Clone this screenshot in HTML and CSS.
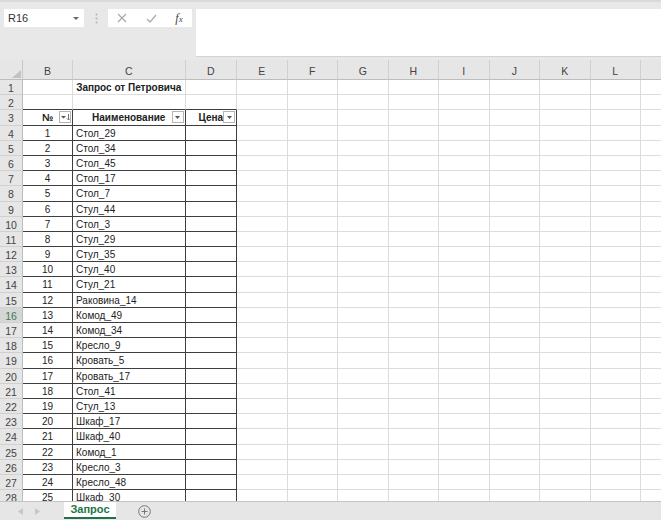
FILE: index.html
```html
<!DOCTYPE html>
<html lang="ru">

<head>
  <meta charset="UTF-8">
  <title>Запрос от Петровича</title>
  <link rel="stylesheet" href="styles.css">
</head>

<body>
  <!-- formula bar -->
  <div class="toolbar">
    <div class="namebox">
      <span>R16</span>
      <svg width="6" height="3" viewBox="0 0 6 3"><path d="M0 0h6L3 3z" fill="#666" /></svg>
    </div>
    <div class="dots">
      <svg width="3" height="11" viewBox="0 0 3 11">
        <circle cx="1.5" cy="1.5" r="1" fill="#b4b4b4" />
        <circle cx="1.5" cy="5.5" r="1" fill="#b4b4b4" />
        <circle cx="1.5" cy="9.5" r="1" fill="#b4b4b4" />
      </svg>
    </div>
    <div class="fxbox">
      <svg width="10" height="10" viewBox="0 0 10 10"><path d="M1 1l8 8M9 1l-8 8" stroke="#a9a9a9" stroke-width="1.2" /></svg>
      <svg width="11" height="9" viewBox="0 0 11 9"><path d="M1 5l3 3 6-7" fill="none" stroke="#a9a9a9" stroke-width="1.2" /></svg>
      <span class="fx">f<small>x</small></span>
    </div>
    <div class="input"></div>
  </div>

  <!-- sheet -->
  <div class="sheet">
    <div class="grid">
      <div class="corner"><svg width="9" height="8" viewBox="0 0 9 8"><path d="M9 0v8H0z" fill="#c2c2c2" /></svg></div>
      <div class="ch">B</div><div class="ch">C</div><div class="ch">D</div><div class="ch">E</div><div class="ch">F</div><div class="ch">G</div><div class="ch">H</div><div class="ch">I</div><div class="ch">J</div><div class="ch">K</div><div class="ch">L</div><div class="ch"></div>

      <div class="rh">1</div><div></div><div class="title">Запрос от Петровича</div><div></div><div></div><div></div><div></div><div></div><div></div><div></div><div></div><div></div><div></div>
      <div class="rh">2</div><div class="tb"></div><div class="tb"></div><div class="tb"></div><div></div><div></div><div></div><div></div><div></div><div></div><div></div><div></div><div></div>
      <div class="rh">3</div>
      <div class="t hd">№<span class="filter"><svg width="9" height="7" viewBox="0 0 9 7"><path d="M0 2h5L2.5 4.5z" fill="#555" /><path d="M7.5 0v6M6 4.5l1.5 1.5 1.5-1.5" fill="none" stroke="#777" /></svg></span></div>
      <div class="t hd">Наименование<span class="filter"><svg width="5" height="3" viewBox="0 0 5 3"><path d="M0 0h5L2.5 3z" fill="#555" /></svg></span></div>
      <div class="t hd">Цена<span class="filter"><svg width="5" height="3" viewBox="0 0 5 3"><path d="M0 0h5L2.5 3z" fill="#555" /></svg></span></div>
      <div></div><div></div><div></div><div></div><div></div><div></div><div></div><div></div><div></div>

      <div class="rh">4</div><div class="t n">1</div><div class="t">Стол_29</div><div class="t"></div><div></div><div></div><div></div><div></div><div></div><div></div><div></div><div></div><div></div>
      <div class="rh">5</div><div class="t n">2</div><div class="t">Стол_34</div><div class="t"></div><div></div><div></div><div></div><div></div><div></div><div></div><div></div><div></div><div></div>
      <div class="rh">6</div><div class="t n">3</div><div class="t">Стол_45</div><div class="t"></div><div></div><div></div><div></div><div></div><div></div><div></div><div></div><div></div><div></div>
      <div class="rh">7</div><div class="t n">4</div><div class="t">Стол_17</div><div class="t"></div><div></div><div></div><div></div><div></div><div></div><div></div><div></div><div></div><div></div>
      <div class="rh">8</div><div class="t n">5</div><div class="t">Стол_7</div><div class="t"></div><div></div><div></div><div></div><div></div><div></div><div></div><div></div><div></div><div></div>
      <div class="rh">9</div><div class="t n">6</div><div class="t">Стул_44</div><div class="t"></div><div></div><div></div><div></div><div></div><div></div><div></div><div></div><div></div><div></div>
      <div class="rh">10</div><div class="t n">7</div><div class="t">Стол_3</div><div class="t"></div><div></div><div></div><div></div><div></div><div></div><div></div><div></div><div></div><div></div>
      <div class="rh">11</div><div class="t n">8</div><div class="t">Стул_29</div><div class="t"></div><div></div><div></div><div></div><div></div><div></div><div></div><div></div><div></div><div></div>
      <div class="rh">12</div><div class="t n">9</div><div class="t">Стул_35</div><div class="t"></div><div></div><div></div><div></div><div></div><div></div><div></div><div></div><div></div><div></div>
      <div class="rh">13</div><div class="t n">10</div><div class="t">Стул_40</div><div class="t"></div><div></div><div></div><div></div><div></div><div></div><div></div><div></div><div></div><div></div>
      <div class="rh">14</div><div class="t n">11</div><div class="t">Стул_21</div><div class="t"></div><div></div><div></div><div></div><div></div><div></div><div></div><div></div><div></div><div></div>
      <div class="rh">15</div><div class="t n">12</div><div class="t">Раковина_14</div><div class="t"></div><div></div><div></div><div></div><div></div><div></div><div></div><div></div><div></div><div></div>
      <div class="rh active">16</div><div class="t n">13</div><div class="t">Комод_49</div><div class="t"></div><div></div><div></div><div></div><div></div><div></div><div></div><div></div><div></div><div></div>
      <div class="rh">17</div><div class="t n">14</div><div class="t">Комод_34</div><div class="t"></div><div></div><div></div><div></div><div></div><div></div><div></div><div></div><div></div><div></div>
      <div class="rh">18</div><div class="t n">15</div><div class="t">Кресло_9</div><div class="t"></div><div></div><div></div><div></div><div></div><div></div><div></div><div></div><div></div><div></div>
      <div class="rh">19</div><div class="t n">16</div><div class="t">Кровать_5</div><div class="t"></div><div></div><div></div><div></div><div></div><div></div><div></div><div></div><div></div><div></div>
      <div class="rh">20</div><div class="t n">17</div><div class="t">Кровать_17</div><div class="t"></div><div></div><div></div><div></div><div></div><div></div><div></div><div></div><div></div><div></div>
      <div class="rh">21</div><div class="t n">18</div><div class="t">Стол_41</div><div class="t"></div><div></div><div></div><div></div><div></div><div></div><div></div><div></div><div></div><div></div>
      <div class="rh">22</div><div class="t n">19</div><div class="t">Стул_13</div><div class="t"></div><div></div><div></div><div></div><div></div><div></div><div></div><div></div><div></div><div></div>
      <div class="rh">23</div><div class="t n">20</div><div class="t">Шкаф_17</div><div class="t"></div><div></div><div></div><div></div><div></div><div></div><div></div><div></div><div></div><div></div>
      <div class="rh">24</div><div class="t n">21</div><div class="t">Шкаф_40</div><div class="t"></div><div></div><div></div><div></div><div></div><div></div><div></div><div></div><div></div><div></div>
      <div class="rh">25</div><div class="t n">22</div><div class="t">Комод_1</div><div class="t"></div><div></div><div></div><div></div><div></div><div></div><div></div><div></div><div></div><div></div>
      <div class="rh">26</div><div class="t n">23</div><div class="t">Кресло_3</div><div class="t"></div><div></div><div></div><div></div><div></div><div></div><div></div><div></div><div></div><div></div>
      <div class="rh">27</div><div class="t n">24</div><div class="t">Кресло_48</div><div class="t"></div><div></div><div></div><div></div><div></div><div></div><div></div><div></div><div></div><div></div>
      <div class="rh">28</div><div class="t n">25</div><div class="t">Шкаф_30</div><div class="t"></div><div></div><div></div><div></div><div></div><div></div><div></div><div></div><div></div><div></div>
    </div>
  </div>

  <!-- sheet tabs -->
  <div class="tabs">
    <div class="nav">
      <svg width="5" height="7" viewBox="0 0 5 7"><path d="M5 0v7L0 3.5z" fill="#c6c6c6" /></svg>
      <svg width="5" height="7" viewBox="0 0 5 7"><path d="M0 0v7l5-3.5z" fill="#c6c6c6" /></svg>
    </div>
    <div class="tab">Запрос</div>
    <div class="add">
      <svg width="13" height="13" viewBox="0 0 13 13">
        <circle cx="6.5" cy="6.5" r="5.8" fill="none" stroke="#777" />
        <path d="M6.5 3.5v6M3.5 6.5h6" stroke="#777" />
      </svg>
    </div>
  </div>
</body>

</html>
```

FILE: styles.css
```css
html {
  background: #fff;
}

body {
  margin: 0;
  overflow: hidden;
  font-family: "Liberation Sans", Arial, sans-serif;
  color: #222;
}

/* formula bar */
.toolbar {
  display: flex;
  align-items: flex-start;
  height: 60px;
  padding: 7px 0 0 4px;
  box-sizing: border-box;
  background: #e8e8e8;
  border-top: 2px solid #dadada;
}

.namebox {
  display: flex;
  align-items: center;
  justify-content: space-between;
  width: 80px;
  height: 18px;
  padding: 0 5px 0 4px;
  box-sizing: border-box;
  background: #fff;
  font-size: 11px;
  color: #333;
}

.dots {
  display: flex;
  justify-content: center;
  width: 24px;
  padding-top: 4px;
}

.fxbox {
  display: flex;
  align-items: center;
  justify-content: space-around;
  width: 84px;
  height: 18px;
  background: #fff;
}

.fx {
  font: italic 12px "Liberation Serif", serif;
  color: #444;
}

.fx small {
  font-size: 9px;
}

.input {
  flex: 1;
  height: 48px;
  margin-left: 4px;
  background: #fff;
  border-bottom: 1px solid #d2d2d2;
  box-sizing: border-box;
}

/* sheet */
.sheet {
  height: 441px;
  overflow: hidden;
  background: #fff;
}

.grid {
  display: grid;
  grid-template-columns: 23px 50px 112.5px 51.5px repeat(8, 50.5px) 60px;
  grid-template-rows: 20px;
  grid-auto-rows: 15.2px;
  width: max-content;
  font-size: 10px;
}

.grid > div {
  position: relative;
  padding: 0 3px;
  box-sizing: border-box;
  border-right: 1px solid #dcdcdc;
  border-bottom: 1px solid #dcdcdc;
  line-height: 16px;
  white-space: nowrap;
}

.grid > .corner {
  background: #e6e6e6;
  border-right-color: #c8c8c8;
  border-bottom-color: #bdbdbd;
}

.corner svg {
  position: absolute;
  right: 1px;
  bottom: 1px;
}

.grid > .ch {
  padding-top: 4px;
  background: #e6e6e6;
  border-right-color: #d0d0d0;
  border-bottom-color: #bdbdbd;
  text-align: center;
  line-height: 15px;
  font-size: 10.5px;
  color: #444;
}

.grid > .rh {
  padding: 0;
  background: #e6e6e6;
  border-right-color: #bdbdbd;
  border-bottom-color: #d0d0d0;
  text-align: center;
  font-size: 10.5px;
  color: #444;
}

.grid > .rh.active {
  background: #d6d6d6;
  color: #3b7a57;
}

.grid > .t {
  border-right-color: #3e3e3e;
  border-bottom-color: #3e3e3e;
}

.grid > .tb {
  border-bottom-color: #3e3e3e;
}

.n {
  text-align: center;
}

.title,
.hd {
  font-weight: bold;
  text-align: center;
}

.filter {
  position: absolute;
  top: 1px;
  right: 1px;
  display: flex;
  align-items: center;
  justify-content: center;
  width: 12px;
  height: 12px;
  box-sizing: border-box;
  border: 1px solid #b4b4b4;
  background: #fff;
}

/* sheet tabs */
.tabs {
  display: flex;
  align-items: flex-start;
  height: 19px;
  box-sizing: border-box;
  background: #e6e6e6;
  border-top: 1px solid #c4c4c4;
}

.nav {
  display: flex;
  align-items: center;
  gap: 12px;
  width: 64px;
  height: 18px;
  padding-left: 18px;
  box-sizing: border-box;
}

.tab {
  width: 52px;
  height: 17px;
  box-sizing: border-box;
  background: #fff;
  border-bottom: 2px solid #217346;
  text-align: center;
  line-height: 15px;
  font-size: 11px;
  font-weight: bold;
  color: #217346;
}

.add {
  display: flex;
  align-items: center;
  height: 18px;
  margin-left: 22px;
}
```
